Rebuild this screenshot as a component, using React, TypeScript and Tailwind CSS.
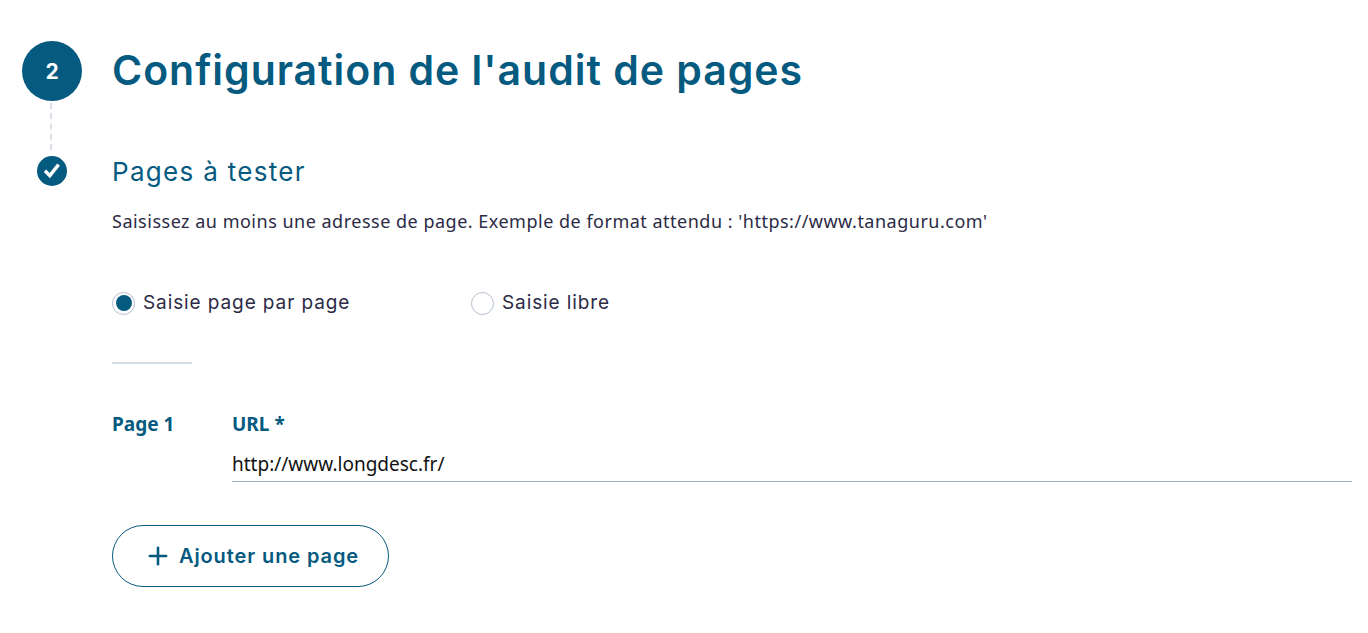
import { Plus } from "lucide-react";

const title = "font-['Inter','Liberation_Sans',sans-serif]";
const body = "font-['Noto_Sans','Liberation_Sans',sans-serif]";

export default function App() {
  return (
    <div className={`min-h-[633px] bg-white pt-[41px] pl-[22px] pr-[16px] ${title}`}>
      <div className="flex gap-[30px]">
        {/* step rail */}
        <div className="flex w-[60px] shrink-0 flex-col items-center">
          <div className="flex h-[60px] w-[60px] items-center justify-center rounded-full bg-[#055a80] pt-[1px] text-[21px] font-bold text-white">
            2
          </div>
          <div className="mt-[2px] mr-[2px] h-[47px] border-l-2 border-dashed border-[#d9e0ea]" />
          <div className="mt-[6px] flex h-[30px] w-[30px] items-center justify-center rounded-full bg-[#055a80]">
            <svg viewBox="0 0 30 30" className="h-[30px] w-[30px]" fill="none" stroke="white" strokeWidth="3.4">
              <path d="M8 14.8 12.8 19.6 21.6 8.6" />
            </svg>
          </div>
        </div>

        <div className="min-w-0 flex-1">
          <h1 className="flex h-[60px] items-center whitespace-nowrap text-[41px] font-semibold tracking-[0.97px] text-[#055a80]">
            Configuration de l'audit de pages
          </h1>
          <h2 className="mt-[53px] h-[36px] text-[26px] leading-[36px] font-normal tracking-[1.3px] text-[#055a80]">
            Pages à tester
          </h2>
          <p className={`mt-[19px] whitespace-nowrap text-[18px] leading-[24px] tracking-[0.5px] text-[#2b2b46] ${body}`}>
            Saisissez au moins une adresse de page. Exemple de format attendu : 'https://www.tanaguru.com'
          </p>

          <div className="mt-[58px] flex text-[19px] leading-[24px] tracking-[0.9px] text-[#2b2b46]">
            <label className="flex w-[359px] items-center gap-[8px]">
              <span className="flex h-[23px] w-[23px] items-center justify-center rounded-full border border-[#b4c0d0]">
                <span className="h-[16px] w-[16px] rounded-full bg-[#055a80]" />
              </span>
              Saisie page par page
            </label>
            <label className="flex items-center gap-[8px]">
              <span className="h-[23px] w-[23px] rounded-full border border-[#b4c0d0]" />
              Saisie libre
            </label>
          </div>

          <div className="mt-[47px] h-[2px] w-[80px] bg-[#d3dde6]" />

          <div className={`mt-[48px] flex ${body}`}>
            <div className="w-[120px] shrink-0 text-[19px] leading-[24px] font-bold text-[#055a80]">Page 1</div>
            <div className="min-w-0 flex-1">
              <div className="text-[19px] leading-[24px] font-bold text-[#055a80]">URL *</div>
              <div className="mt-[12px] h-[34px] border-b border-[#a3b1c0] text-[19px] leading-[32px] text-[#111111]">
                http://www.longdesc.fr/
              </div>
            </div>
          </div>

          <button className="mt-[43px] flex h-[62px] w-[277px] items-center justify-center gap-[7px] rounded-full border border-[#055a80] pl-[2px] text-[20px] font-semibold tracking-[0.9px] text-[#055a80]">
            <Plus className="h-[28px] w-[28px]" strokeWidth={2.2} />
            Ajouter une page
          </button>
        </div>
      </div>
    </div>
  );
}
